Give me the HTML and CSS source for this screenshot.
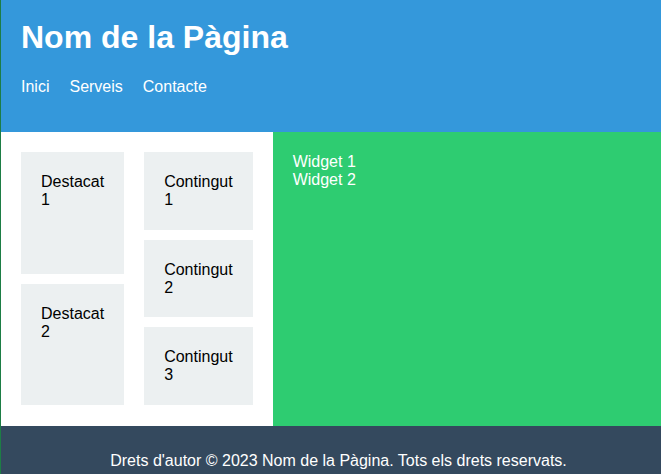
FILE: index.html
```html
<!DOCTYPE html>
<html lang="ca">
<head>
<meta charset="utf-8">
<title>Nom de la Pàgina</title>
<link rel="stylesheet" href="styles.css">
</head>
<body>
<header class="site-header">
  <h1 class="site-title">Nom de la Pàgina</h1>
  <nav class="site-nav">
    <ul class="nav-list">
      <li><a class="nav-link" href="#">Inici</a></li>
      <li><a class="nav-link" href="#">Serveis</a></li>
      <li><a class="nav-link" href="#">Contacte</a></li>
    </ul>
  </nav>
</header>
<main class="site-main">
  <section class="content">
    <div class="column">
      <div class="box box-tall">Destacat 1</div>
      <div class="box box-tall">Destacat 2</div>
    </div>
    <div class="column">
      <div class="box">Contingut 1</div>
      <div class="box">Contingut 2</div>
      <div class="box">Contingut 3</div>
    </div>
  </section>
  <aside class="sidebar">
    <div>Widget 1</div>
    <div>Widget 2</div>
  </aside>
</main>
<footer class="site-footer">
  <p class="footer-text">Drets d'autor © 2023 Nom de la Pàgina. Tots els drets reservats.</p>
</footer>
</body>
</html>
```

FILE: styles.css
```css
html, body {
  margin: 0;
  padding: 0;
}
body {
  font-family: "Liberation Sans", Arial, sans-serif;
  font-size: 16px;
  border-left: 1px solid #1d7d45;
  background: #ffffff;
  overflow: hidden;
}
.site-header {
  background: #3498db;
  color: #ffffff;
  padding: 19px 20px 20px;
}
.site-title {
  margin: 0;
  font-size: 32px;
  line-height: 37px;
  font-weight: bold;
}
.site-nav {
  margin-top: 22px;
}
.nav-list {
  list-style: none;
  margin: 0 0 16px;
  padding: 0;
  display: flex;
  gap: 20px;
  line-height: 18px;
}
.nav-link {
  color: #ffffff;
  text-decoration: none;
}
.site-main {
  display: flex;
  height: 294px;
}
.content {
  display: flex;
  gap: 20px;
  padding: 20px 20px 21px;
}
.column {
  display: flex;
  flex-direction: column;
  gap: 10px;
  width: min-content;
}
.box {
  flex: 1;
  background: #ecf0f1;
  color: #000000;
  padding: 21px 20px 19px;
}
.sidebar {
  flex: 1;
  background: #2ecc71;
  color: #ffffff;
  padding: 21px 20px 19px;
}
.site-footer {
  background: #34495e;
  color: #ffffff;
  padding: 10px 0 10px 15px;
  text-align: center;
}
.footer-text {
  margin: 16px 0;
  line-height: 18px;
}
```
